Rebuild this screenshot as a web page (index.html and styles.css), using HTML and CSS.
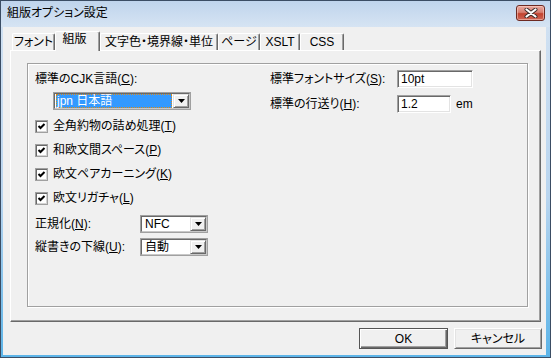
FILE: index.html
```html
<!DOCTYPE html>
<html lang="ja">
<head>
<meta charset="utf-8">
<title>組版オプション設定</title>
<link rel="stylesheet" href="styles.css">
</head>
<body>
<div class="window">
  <div class="titlebar">
    <span class="title">組版オプション設定</span>
    <button class="close" aria-label="閉じる">
      <svg width="14" height="10" viewBox="0 0 14 10">
        <path d="M2.5 1.5 L11.5 8.5 M11.5 1.5 L2.5 8.5" stroke="#3a2a28" stroke-width="4" stroke-linecap="round"/>
        <path d="M2.5 1.5 L11.5 8.5 M11.5 1.5 L2.5 8.5" stroke="#ffffff" stroke-width="2.2" stroke-linecap="round"/>
      </svg>
    </button>
  </div>
  <div class="client">
    <div class="tabs">
      <div class="tab w1">フォント</div>
      <div class="tab selected">組版</div>
      <div class="tab w3">文字色・境界線・単位</div>
      <div class="tab w4">ページ</div>
      <div class="tab w5">XSLT</div>
      <div class="tab w6">CSS</div>
    </div>
    <div class="panel">
      <div class="group">
        <div class="col col-left">
          <div class="label-row">標準のCJK言語(<u>C</u>):</div>
          <div class="combo combo-lang">
            <div class="combo-inner">
              <div class="combo-value highlighted"><span class="focus">jpn 日本語</span></div>
              <div class="arrow"><svg width="7" height="4" viewBox="0 0 7 4"><polygon points="0,0 7,0 3.5,4" fill="#000"/></svg></div>
            </div>
          </div>
          <div class="check"><span class="box"><svg width="9" height="9" viewBox="0 0 9 9"><polyline points="1.5,4 3.5,6 7.5,2" fill="none" stroke="#000" stroke-width="2"/></svg></span>全角約物の詰め処理(<u>T</u>)</div>
          <div class="check"><span class="box"><svg width="9" height="9" viewBox="0 0 9 9"><polyline points="1.5,4 3.5,6 7.5,2" fill="none" stroke="#000" stroke-width="2"/></svg></span>和欧文間スペース(<u>P</u>)</div>
          <div class="check"><span class="box"><svg width="9" height="9" viewBox="0 0 9 9"><polyline points="1.5,4 3.5,6 7.5,2" fill="none" stroke="#000" stroke-width="2"/></svg></span>欧文ペアカーニング(<u>K</u>)</div>
          <div class="check"><span class="box"><svg width="9" height="9" viewBox="0 0 9 9"><polyline points="1.5,4 3.5,6 7.5,2" fill="none" stroke="#000" stroke-width="2"/></svg></span>欧文リガチャ(<u>L</u>)</div>
          <div class="field-row first-field">
            <span class="flabel">正規化(<u>N</u>):</span>
            <div class="combo combo-small">
              <div class="combo-inner">
                <div class="combo-value">NFC</div>
                <div class="arrow"><svg width="7" height="4" viewBox="0 0 7 4"><polygon points="0,0 7,0 3.5,4" fill="#000"/></svg></div>
              </div>
            </div>
          </div>
          <div class="field-row">
            <span class="flabel">縦書きの下線(<u>U</u>):</span>
            <div class="combo combo-small">
              <div class="combo-inner">
                <div class="combo-value">自動</div>
                <div class="arrow"><svg width="7" height="4" viewBox="0 0 7 4"><polygon points="0,0 7,0 3.5,4" fill="#000"/></svg></div>
              </div>
            </div>
          </div>
        </div>
        <div class="col col-right">
          <div class="rrow">
            <span class="rlabel">標準フォントサイズ(<u>S</u>):</span>
            <div class="input input-wide">10pt</div>
          </div>
          <div class="rrow rrow2">
            <span class="rlabel">標準の行送り(<u>H</u>):</span>
            <div class="input input-narrow">1.2</div>
            <span class="unit">em</span>
          </div>
        </div>
      </div>
    </div>
    <div class="buttons">
      <button class="btn default">OK</button>
      <button class="btn">キャンセル</button>
    </div>
  </div>
</div>
</body>
</html>
```

FILE: styles.css
```css
* { box-sizing: border-box; }

html, body {
  margin: 0;
  padding: 0;
}

body {
  width: 551px;
  height: 358px;
  overflow: hidden;
  background: #f0f0f0;
  color: #000;
  font-family: "Liberation Sans", "Noto Sans CJK JP", sans-serif;
  font-size: 12px;
  line-height: 16px;
  font-feature-settings: "palt" 1;
}

u { text-decoration: underline; text-underline-offset: 1px; }

.window {
  width: 551px;
  height: 358px;
  border: 1px solid #3b4d64;
  background: linear-gradient(#d3e2f2 0%, #b9d5ef 55%, #5cb4e8 100%);
  display: flex;
  flex-direction: column;
}

.titlebar {
  height: 26px;
  flex: none;
  display: flex;
  align-items: center;
  justify-content: space-between;
  padding: 0 5px 2px 6px;
  background: linear-gradient(#bfd4ec, #d6e4f3);
}

.title {
  font-size: 12px;
  line-height: 16px;
  color: #000;
}

.close {
  width: 29px;
  height: 16px;
  padding: 0;
  border: 1px solid #6e2a22;
  border-radius: 3px;
  background: linear-gradient(#e9a89d 0%, #d77f72 45%, #c2432f 55%, #cf6656 100%);
  display: flex;
  align-items: center;
  justify-content: center;
  box-shadow: inset 0 0 0 1px rgba(255, 220, 210, 0.5);
}

.close svg { display: block; }

.client {
  flex: 1;
  margin: 0 4px 2px 2px;
  background: #f0f0f0;
  display: flex;
  flex-direction: column;
  padding: 4px 0 0 7px;
}

/* Tabs */
.tabs {
  height: 19px;
  display: flex;
  align-items: flex-end;
  padding-left: 2px;
}

.tab {
  height: 17px;
  border-top: 1px solid #fff;
  border-left: 1px solid #fff;
  border-right: 1px solid #696969;
  box-shadow: inset -1px 0 0 #a0a0a0;
  border-radius: 2px 2px 0 0;
  text-align: center;
  line-height: 15px;
  padding-top: 1px;
  white-space: nowrap;
}

.w1 { width: 43px; }
.w3 { width: 118px; }
.w4 { width: 42px; }
.w5 { width: 40px; }
.w6 { width: 44px; }

.tab.selected {
  width: 45px;
  height: 20px;
  margin-bottom: -1px;
  padding-top: 0;
  padding-right: 6px;
  background: #f0f0f0;
  position: relative;
  z-index: 1;
}

/* Panel */
.panel {
  width: 531px;
  height: 272px;
  border: 1px solid;
  border-color: #fff #696969 #696969 #fff;
  box-shadow: inset -1px -1px 0 #a0a0a0;
  padding: 12px 12px 14px 16px;
  display: flex;
  flex-direction: column;
}

.group {
  flex: 1;
  border: 1px solid #a0a0a0;
  box-shadow: 1px 1px 0 #fff, inset 1px 1px 0 #fff;
  display: flex;
  padding-left: 7px;
}

.col-left {
  width: 235px;
  padding-top: 7px;
}

.col-right {
  padding-top: 6px;
}

.label-row {
  height: 16px;
  white-space: nowrap;
}

/* Combo boxes */
.combo {
  height: 18px;
  border: 1px solid #a0a0a0;
  background: #fff;
}

.combo-inner {
  height: 100%;
  border: 1px solid;
  border-color: #696969 #c8c8c8 #c8c8c8 #696969;
  display: flex;
}

.combo-lang {
  width: 138px;
  margin: 5px 0 0 18px;
}

.combo-small {
  width: 68px;
}

.combo-value {
  flex: 1;
  line-height: 14px;
  padding-left: 3px;
  white-space: nowrap;
  overflow: hidden;
}

.combo-value.highlighted {
  padding-left: 0;
  margin: 0 1px;
  display: flex;
}

.focus {
  flex: 1;
  background: #3399ff;
  color: #fff;
  border: 1px dotted #d88a1a;
  line-height: 12px;
  padding-left: 0;
}

.arrow {
  width: 16px;
  height: 100%;
  flex: none;
  background: #f0f0f0;
  border: 1px solid;
  border-color: #e3e3e3 #696969 #696969 #e3e3e3;
  box-shadow: inset 1px 1px 0 #fff, inset -1px -1px 0 #a0a0a0;
  display: flex;
  align-items: center;
  justify-content: center;
}

.arrow svg { display: block; }

/* Checkboxes */
.check {
  height: 24px;
  display: flex;
  align-items: center;
  white-space: nowrap;
}

.combo-lang + .check { margin-top: 4px; }

.box {
  width: 13px;
  height: 13px;
  flex: none;
  margin-right: 5px;
  background: #fff;
  border: 1px solid #a0a0a0;
  box-shadow: inset 1px 1px 0 #696969, inset -1px -1px 0 #d4d4d4;
  display: flex;
  align-items: center;
  justify-content: center;
}

.box svg { display: block; }

/* Field rows */
.field-row {
  height: 18px;
  margin-top: 5px;
  display: flex;
  align-items: center;
}

.flabel {
  width: 105px;
  white-space: nowrap;
}

.rrow {
  height: 18px;
  display: flex;
  align-items: center;
}

.rrow2 { margin-top: 7px; }

.rlabel {
  width: 127px;
  white-space: nowrap;
}

.input {
  height: 18px;
  background: #fff;
  border: 1px solid;
  border-color: #a0a0a0 #fff #fff #a0a0a0;
  box-shadow: inset 1px 1px 0 #696969, inset -1px -1px 0 #e3e3e3;
  padding-left: 3px;
  line-height: 16px;
}

.input-wide { width: 76px; }
.input-narrow { width: 54px; }

.unit {
  margin-left: 5px;
}

/* Buttons */
.buttons {
  display: flex;
  justify-content: flex-end;
  gap: 6px;
  margin: 6px 4px 0 0;
}

.btn {
  height: 21px;
  width: 88px;
  padding: 0;
  font: inherit;
  color: #000;
  background: #f0f0f0;
  border: 1px solid;
  border-color: #fff #696969 #696969 #fff;
  box-shadow: inset 1px 1px 0 #e3e3e3, inset -1px -1px 0 #a0a0a0;
}

.btn.default {
  width: 89px;
  border-color: #555;
  box-shadow: inset 1px 1px 0 #fff, inset -1px -1px 0 #696969, inset -2px -2px 0 #a0a0a0;
}
```
